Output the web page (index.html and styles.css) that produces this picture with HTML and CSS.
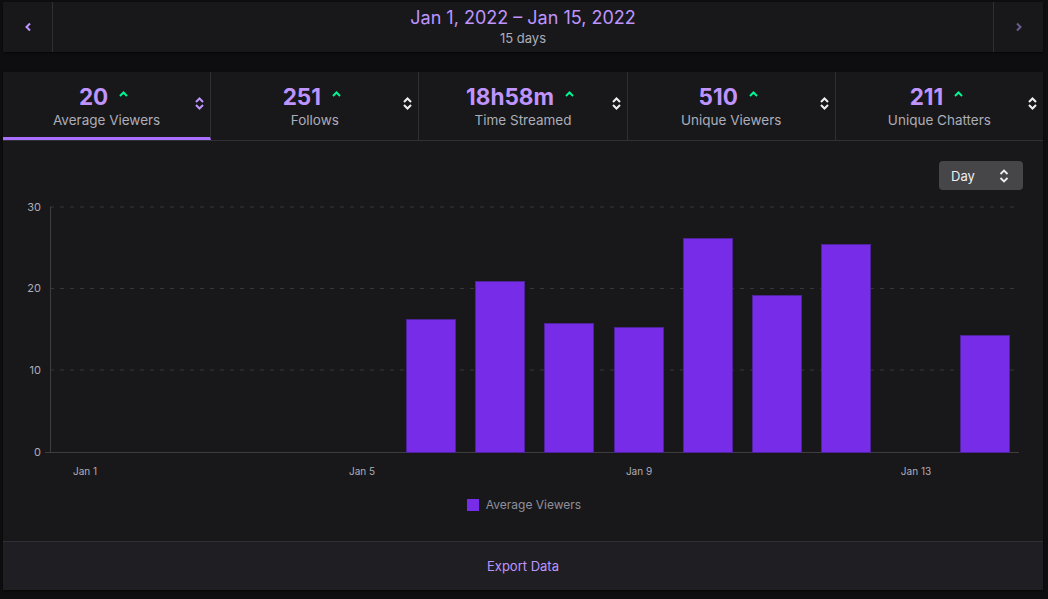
FILE: index.html
```html
<!DOCTYPE html>
<html lang="en">
<head>
  <meta charset="UTF-8" />
  <title>Stream Summary</title>
  <link rel="stylesheet" href="styles.css">
</head>
<body>
  <div class="range-bar">
    <button class="nav-btn">
      <svg width="8" height="10" viewBox="0 0 8 10"><path d="M6 1.5 L2.5 5 L6 8.5" fill="none" stroke="currentColor" stroke-width="2"/></svg>
    </button>
    <div class="range-text">
      <div class="range-title">Jan 1, 2022 – Jan 15, 2022</div>
      <div class="range-sub">15 days</div>
    </div>
    <button class="nav-btn disabled">
      <svg width="8" height="10" viewBox="0 0 8 10"><path d="M2 1.5 L5.5 5 L2 8.5" fill="none" stroke="currentColor" stroke-width="2"/></svg>
    </button>
  </div>

  <div class="card">
    <div class="tabs">
      <div class="tab active">
        <div class="tab-value">20 <svg class="up" width="9" height="6" viewBox="0 0 9 6"><path d="M1 5 L4.5 1.5 L8 5" fill="none" stroke="currentColor" stroke-width="2"/></svg></div>
        <div class="tab-label">Average Viewers</div>
        <svg class="sort" width="9" height="15" viewBox="0 0 9 15"><path d="M1 6 L4.5 2.5 L8 6 M1 9 L4.5 12.5 L8 9" fill="none" stroke="currentColor" stroke-width="2"/></svg>
      </div>
      <div class="tab">
        <div class="tab-value">251 <svg class="up" width="9" height="6" viewBox="0 0 9 6"><path d="M1 5 L4.5 1.5 L8 5" fill="none" stroke="currentColor" stroke-width="2"/></svg></div>
        <div class="tab-label">Follows</div>
        <svg class="sort" width="9" height="15" viewBox="0 0 9 15"><path d="M1 6 L4.5 2.5 L8 6 M1 9 L4.5 12.5 L8 9" fill="none" stroke="currentColor" stroke-width="2"/></svg>
      </div>
      <div class="tab">
        <div class="tab-value">18h58m <svg class="up" width="9" height="6" viewBox="0 0 9 6"><path d="M1 5 L4.5 1.5 L8 5" fill="none" stroke="currentColor" stroke-width="2"/></svg></div>
        <div class="tab-label">Time Streamed</div>
        <svg class="sort" width="9" height="15" viewBox="0 0 9 15"><path d="M1 6 L4.5 2.5 L8 6 M1 9 L4.5 12.5 L8 9" fill="none" stroke="currentColor" stroke-width="2"/></svg>
      </div>
      <div class="tab">
        <div class="tab-value">510 <svg class="up" width="9" height="6" viewBox="0 0 9 6"><path d="M1 5 L4.5 1.5 L8 5" fill="none" stroke="currentColor" stroke-width="2"/></svg></div>
        <div class="tab-label">Unique Viewers</div>
        <svg class="sort" width="9" height="15" viewBox="0 0 9 15"><path d="M1 6 L4.5 2.5 L8 6 M1 9 L4.5 12.5 L8 9" fill="none" stroke="currentColor" stroke-width="2"/></svg>
      </div>
      <div class="tab">
        <div class="tab-value">211 <svg class="up" width="9" height="6" viewBox="0 0 9 6"><path d="M1 5 L4.5 1.5 L8 5" fill="none" stroke="currentColor" stroke-width="2"/></svg></div>
        <div class="tab-label">Unique Chatters</div>
        <svg class="sort" width="9" height="15" viewBox="0 0 9 15"><path d="M1 6 L4.5 2.5 L8 6 M1 9 L4.5 12.5 L8 9" fill="none" stroke="currentColor" stroke-width="2"/></svg>
      </div>
    </div>

    <div class="chart-area">
      <div class="toolbar">
        <div class="select">
          <span>Day</span>
          <svg width="10" height="14" viewBox="0 0 10 14"><path d="M1.5 5 L5 1.5 L8.5 5 M1.5 9 L5 12.5 L8.5 9" fill="none" stroke="currentColor" stroke-width="1.8"/></svg>
        </div>
      </div>

      <svg class="chart" width="1040" height="290" viewBox="0 0 1040 290">
        <g class="grid">
          <line x1="47" y1="12" x2="1014" y2="12"/>
          <line x1="47" y1="93.5" x2="1014" y2="93.5"/>
          <line x1="47" y1="175" x2="1014" y2="175"/>
        </g>
        <line class="axis" x1="47.5" y1="12" x2="47.5" y2="257.5"/>
        <line class="axis" x1="42" y1="257.5" x2="1016" y2="257.5"/>
        <g class="ylabels">
          <text x="38" y="16">30</text>
          <text x="38" y="97">20</text>
          <text x="38" y="179">10</text>
          <text x="38" y="261">0</text>
        </g>
        <g class="xlabels">
          <text x="82" y="280">Jan 1</text>
          <text x="359" y="280">Jan 5</text>
          <text x="636" y="280">Jan 9</text>
          <text x="913" y="280">Jan 13</text>
        </g>
        <g class="bars">
          <rect x="403.5" y="124.5" width="49" height="133"/>
          <rect x="472.5" y="86.5" width="49" height="171"/>
          <rect x="541.5" y="128.5" width="49" height="129"/>
          <rect x="611.5" y="132.5" width="49" height="125"/>
          <rect x="680.5" y="43.5" width="49" height="214"/>
          <rect x="749.5" y="100.5" width="49" height="157"/>
          <rect x="818.5" y="49.5" width="49" height="208"/>
          <rect x="957.5" y="140.5" width="49" height="117"/>
        </g>
      </svg>

      <div class="legend">
        <span class="swatch"></span>
        <span>Average Viewers</span>
      </div>
    </div>

    <div class="export">Export Data</div>
  </div>
</body>
</html>
```

FILE: styles.css
```css
body {
  margin: 0;
  background-color: #0e0e10;
  font-family: Inter, "Noto Sans", sans-serif;
  color: #efeff1;
  width: 1048px;
  height: 599px;
  overflow: hidden;
}
button {
  font-family: inherit;
}
.range-bar {
  display: flex;
  margin: 2px 5px 0 3px;
  height: 50px;
  background-color: #18181b;
  box-shadow: 0 1px 2px rgba(0, 0, 0, 0.6);
}
.nav-btn {
  width: 50px;
  border: none;
  background: transparent;
  color: #bf94ff;
  display: flex;
  align-items: center;
  justify-content: center;
  padding: 0;
}
.nav-btn:first-child {
  border-right: 1px solid #2f2f35;
}
.nav-btn.disabled {
  color: #6e5a91;
  border-left: 1px solid #2f2f35;
}
.range-text {
  flex: 1;
  text-align: center;
  padding-top: 5px;
}
.range-title {
  color: #bf94ff;
  font-size: 18px;
  line-height: 22px;
}
.range-sub {
  color: #adadb8;
  font-size: 13px;
  line-height: 18px;
}
.card {
  margin: 20px 5px 0 3px;
  background-color: #18181b;
  height: 518px;
  display: flex;
  flex-direction: column;
  box-shadow: 0 1px 2px rgba(0, 0, 0, 0.6);
}
.tabs {
  display: flex;
  height: 68px;
  border-bottom: 1px solid #2f2f35;
}
.tab {
  flex: 1;
  position: relative;
  border-right: 1px solid #2f2f35;
  text-align: center;
  box-sizing: border-box;
  padding-top: 12px;
}
.tab:last-child {
  border-right: none;
}
.tab.active {
  border-bottom: 3px solid #a970ff;
}
.tab-value {
  display: flex;
  justify-content: center;
  align-items: flex-start;
  color: #bf94ff;
  font-size: 22.5px;
  font-weight: 700;
  line-height: 26px;
  padding-right: 6px;
}
.up {
  color: #00f593;
  margin-left: 11px;
  margin-top: 7px;
}
.tab-label {
  color: #adadb8;
  font-size: 13.5px;
  line-height: 18px;
  margin-top: 1px;
}
.sort {
  position: absolute;
  right: 6px;
  top: 24px;
  color: #efeff1;
}
.tab.active .sort {
  color: #bf94ff;
}
.chart-area {
  height: 400px;
  display: flex;
  flex-direction: column;
}
.toolbar {
  display: flex;
  justify-content: flex-end;
  padding: 20px 20px 0 0;
}
.select {
  width: 84px;
  height: 29px;
  box-sizing: border-box;
  background-color: #464649;
  border-radius: 4px;
  display: flex;
  align-items: center;
  justify-content: space-between;
  padding: 0 14px 0 12px;
  font-size: 13px;
  color: #efeff1;
}
.chart {
  display: block;
  margin-top: 5px;
}
.grid line {
  stroke: #36363b;
  stroke-width: 1;
  stroke-dasharray: 4 6;
}
.axis {
  stroke: #3d3d42;
  stroke-width: 1;
}
.ylabels text {
  fill: #adadb8;
  font-size: 11px;
  text-anchor: end;
  font-family: Inter, sans-serif;
}
.xlabels text {
  fill: #adadb8;
  font-size: 10px;
  text-anchor: middle;
  font-family: Inter, sans-serif;
}
.bars rect {
  fill: #772ce8;
  stroke: #4f2399;
  stroke-width: 1;
}
.legend {
  display: flex;
  justify-content: center;
  align-items: center;
  gap: 7px;
  margin-top: 12px;
  margin-left: 2px;
  font-size: 12px;
  color: #8f8f99;
}
.swatch {
  width: 12px;
  height: 12px;
  background-color: #772ce8;
}
.export {
  flex: 1;
  border-top: 1px solid #2f2f35;
  background-color: #1f1f23;
  color: #bf94ff;
  font-size: 13px;
  display: flex;
  align-items: center;
  justify-content: center;
}
```
